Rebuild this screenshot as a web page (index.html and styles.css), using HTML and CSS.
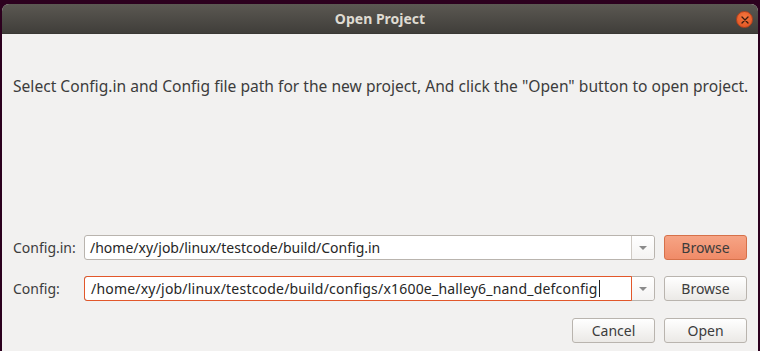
FILE: index.html
```html
<!DOCTYPE html>
<html lang="en">
<head>
    <meta charset="UTF-8">
    <title>Open Project</title>
    <link rel="stylesheet" href="styles.css">
</head>
<body>
    <div class="window">
        <div class="titlebar">
            <span class="title">Open Project</span>
            <button class="close-btn" aria-label="Close">
                <svg width="8" height="8" viewBox="0 0 8 8"><path d="M1 1L7 7M7 1L1 7" stroke="#3a1a0e" stroke-width="1.3" stroke-linecap="round"/></svg>
            </button>
        </div>

        <div class="content">
            <p class="intro">Select Config.in and Config file path for the new project, And click the "Open" button to open project.</p>

            <div class="form">
                <label class="field-label">Config.in:</label>
                <div class="combo">
                    <div class="combo-input">/home/xy/job/linux/testcode/build/Config.in</div>
                    <div class="combo-arrow"><span class="arrow"></span></div>
                </div>
                <button class="btn btn-hover">Browse</button>

                <label class="field-label">Config:</label>
                <div class="combo">
                    <div class="combo-input focused">/home/xy/job/linux/testcode/build/configs/x1600e_halley6_nand_defconfig<span class="caret"></span></div>
                    <div class="combo-arrow"><span class="arrow"></span></div>
                </div>
                <button class="btn">Browse</button>

                <div class="actions">
                    <button class="btn">Cancel</button>
                    <button class="btn">Open</button>
                </div>
            </div>
        </div>
    </div>
</body>
</html>
```

FILE: styles.css
```css
body {
    margin: 0;
    background-color: #2c001e;
    font-family: "Noto Sans", "Open Sans", sans-serif;
    overflow: hidden;
}

.window {
    margin: 4px 0 0 2px;
    width: 756px;
    height: 360px;
    background-color: #f2f1f0;
    border-radius: 7px 7px 0 0;
    overflow: hidden;
}

.titlebar {
    position: relative;
    height: 30px;
    display: flex;
    align-items: center;
    justify-content: center;
    background: linear-gradient(#5b5852, #403e3a);
    border-bottom: 1px solid #3a3834;
    box-sizing: border-box;
}

.title {
    color: #dfdbd2;
    font-size: 14px;
    font-weight: bold;
}

.close-btn {
    position: absolute;
    right: 5px;
    top: 7px;
    width: 17px;
    height: 17px;
    border-radius: 50%;
    border: 1px solid #b5431d;
    background: radial-gradient(circle at 50% 35%, #f5773f, #e0501f);
    padding: 0;
    display: flex;
    align-items: center;
    justify-content: center;
}

.content {
    padding: 0 11px;
}

.intro {
    margin: 42px 0 0 0;
    font-size: 15.6px;
    line-height: 21px;
    color: #3c3c3c;
    white-space: nowrap;
}

.form {
    margin-top: 138px;
    display: grid;
    grid-template-columns: 62px 1fr 83px;
    grid-auto-rows: 25px;
    column-gap: 9px;
    row-gap: 16px;
    align-items: center;
}

.field-label {
    font-size: 14px;
    color: #3c3c3c;
    white-space: nowrap;
}

.combo {
    display: flex;
    height: 25px;
    box-sizing: border-box;
    border: 1px solid #b9b4ae;
    border-radius: 3px;
    background-color: #ffffff;
}

.combo-input {
    flex: 1;
    display: flex;
    align-items: center;
    padding-left: 5px;
    font-size: 14px;
    color: #262626;
    white-space: nowrap;
    overflow: hidden;
    border-right: 1px solid #cfcac4;
}

.combo-input.focused {
    margin: -1px 0 -1px -1px;
    border: 1px solid #e2572a;
    border-radius: 3px 0 0 3px;
    padding-left: 6px;
    letter-spacing: 0.2px;
}

.caret {
    display: inline-block;
    width: 1px;
    height: 17px;
    background-color: #222;
    margin-left: 1px;
}

.combo-arrow {
    width: 22px;
    display: flex;
    align-items: center;
    justify-content: center;
    background: linear-gradient(#ffffff, #f4f3f2);
    border-radius: 0 3px 3px 0;
}

.arrow {
    width: 0;
    height: 0;
    border-left: 4px solid transparent;
    border-right: 4px solid transparent;
    border-top: 4px solid #8a8a8a;
}

.btn {
    height: 25px;
    box-sizing: border-box;
    border: 1px solid #b9b4ae;
    border-radius: 3px;
    background: linear-gradient(#ffffff, #ebe9e6);
    font-family: "Noto Sans", "Open Sans", sans-serif;
    font-size: 14px;
    color: #3c3c3c;
    padding: 0;
}

.btn-hover {
    border-color: #d6714a;
    background: linear-gradient(#f6a485, #f08b68);
}

.actions {
    grid-column: 1 / -1;
    display: flex;
    justify-content: flex-end;
    gap: 9px;
    margin-top: 1px;
}

.actions .btn {
    width: 83px;
}
```
